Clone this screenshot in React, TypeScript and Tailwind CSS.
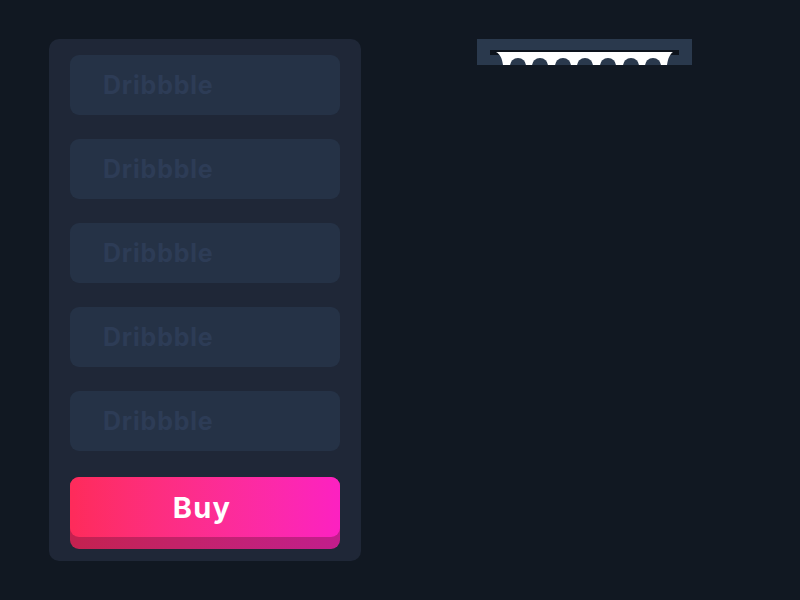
import React from 'react';

const fields = ['Dribbble', 'Dribbble', 'Dribbble', 'Dribbble', 'Dribbble'];

const Receipt = () => (
  <svg width="215" height="26" viewBox="0 0 215 26" className="block">
    <rect width="215" height="26" fill="#2a394d" />
    <rect x="13" y="11" width="189" height="5" fill="#0d131c" />
    <path d="M19 13 L196 13 C193 15 191 19 190 26 L26 26 C25 19 23 15 19 13 Z" fill="#ffffff" />
    {[41, 63, 86, 108, 131, 154, 176].map((cx) => (
      <circle key={cx} cx={cx} cy="27" r="8" fill="#2a394d" />
    ))}
  </svg>
);

export default function App() {
  return (
    <div className="w-[800px] h-[600px] bg-[#111822] flex items-start pt-[39px] pl-[49px] font-['Inter','Liberation_Sans',sans-serif]">
      {/* Form card */}
      <div className="w-[312px] h-[522px] bg-[#1f2737] rounded-[10px] px-[21px] pt-[16px] flex flex-col">
        <div className="flex flex-col gap-[24px]">
          {fields.map((f, i) => (
            <div
              key={i}
              className="h-[60px] rounded-[9px] bg-[#253246] flex items-center pl-[33px]"
            >
              <span className="text-[25px] font-bold tracking-[0.8px] text-[#2d3c56] leading-none">
                {f}
              </span>
            </div>
          ))}
        </div>

        {/* Buy button */}
        <div className="mt-[26px] h-[72px] rounded-[9px] bg-gradient-to-r from-[#c4214f] to-[#c21d8c] flex flex-col">
          <button className="h-[60px] rounded-[9px] bg-gradient-to-r from-[#fe2b5a] to-[#fc21c1] flex items-center justify-center pr-[6px]">
            <span className="text-[29px] font-bold tracking-[1.2px] text-white leading-none">Buy</span>
          </button>
        </div>
      </div>

      {/* Receipt printer */}
      <div className="ml-[116px]">
        <Receipt />
      </div>
    </div>
  );
}
